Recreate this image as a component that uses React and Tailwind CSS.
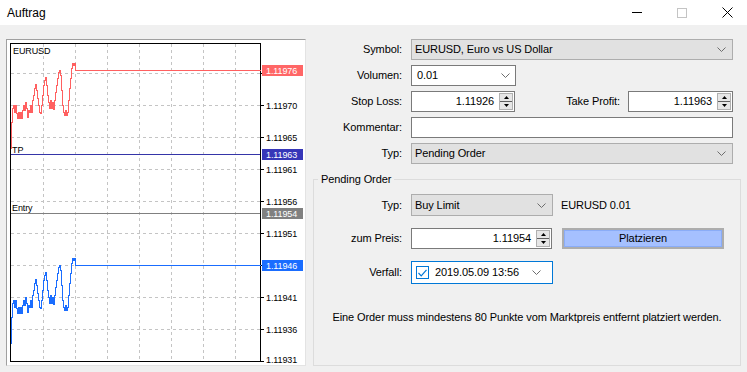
import React from 'react';

// tick data for the mini chart (x in px, y in px of the sell line)
const TICKS = [
  [11, 148], [11, 122], [12, 108], [13, 105], [14, 112], [15, 105], [16, 113], [17, 118], [18, 112],
  [19, 118], [20, 112], [21, 118], [22, 110], [23, 105], [24, 110], [25, 102], [26, 108], [27, 117],
  [28, 110], [29, 112], [30, 105], [31, 112], [32, 100], [33, 95], [34, 88], [35, 84], [36, 90],
  [37, 98], [38, 105], [39, 112], [40, 113], [41, 105], [42, 95], [43, 85], [44, 80], [45, 77],
  [46, 85], [47, 95], [48, 102], [49, 108], [50, 100], [51, 108], [52, 102], [53, 109], [54, 100],
  [55, 92], [56, 85], [57, 78], [58, 72], [59, 70], [60, 75], [61, 90], [62, 105], [63, 112],
  [64, 115], [65, 110], [66, 115], [67, 112], [68, 100], [69, 88], [70, 78], [71, 68], [72, 63],
  [73, 65], [74, 63], [75, 70], [260, 70],
];

function stepPath(offset) {
  let d = `M${TICKS[0][0] + 0.5} ${TICKS[0][1] + offset + 0.5}`;
  for (let i = 1; i < TICKS.length; i++) {
    d += ` H${TICKS[i][0] + 0.5} V${TICKS[i][1] + offset + 0.5}`;
  }
  return d;
}

const GRID_X = [43, 75, 107, 139, 171, 203, 235];
const GRID_Y = [73, 105, 137, 169, 201, 233, 265, 297, 329];
// levels hidden behind the price tags are left out
const AXIS = [
  ['1.11970', 105], ['1.11965', 137], ['1.11961', 169], ['1.11956', 201],
  ['1.11951', 233], ['1.11941', 297], ['1.11936', 329], ['1.11931', 359],
];
const TAGS = [
  ['1.11976', 70, '#ff6666'],
  ['1.11963', 154, '#3636b8'],
  ['1.11954', 213, '#808080'],
  ['1.11946', 265, '#1a6dff'],
];

function Chart() {
  return (
    <svg width="298" height="325" viewBox="7 40 298 325" shapeRendering="crispEdges" className="block">
      <rect x="7" y="40" width="298" height="325" fill="#ffffff" />
      {GRID_X.map((x) => (
        <line key={x} x1={x + 0.5} y1="44" x2={x + 0.5} y2="361" stroke="#c4c4c4" strokeDasharray="3 3" />
      ))}
      {GRID_Y.map((y) => (
        <line key={y} x1="11" y1={y + 0.5} x2="260" y2={y + 0.5} stroke="#c4c4c4" strokeDasharray="3 3" />
      ))}
      <rect x="10.5" y="43.5" width="250" height="318" fill="none" stroke="#000000" />
      {[...GRID_Y, 361].map((y) => (
        <line key={'t' + y} x1="261" y1={y + 0.5} x2="264" y2={y + 0.5} stroke="#000000" />
      ))}
      <g fontFamily="'Liberation Sans', Arial, sans-serif" fontSize="9" fill="#000000" shapeRendering="auto">
        {AXIS.map(([t, y]) => (
          <text key={t} x="266" y={y + 3.5}>{t}</text>
        ))}
      </g>
      <line x1="11" y1="154.5" x2="260" y2="154.5" stroke="#3535a8" />
      <line x1="11" y1="213.5" x2="260" y2="213.5" stroke="#808080" />
      <path d={stepPath(0)} fill="none" stroke="#ff6060" />
      <path d={stepPath(195)} fill="none" stroke="#1a6dff" />
      {TAGS.map(([t, y, c]) => (
        <g key={t}>
          <rect x="262" y={y - 5} width="41" height="11" fill={c} />
          <text x="266" y={y + 4} fontFamily="'Liberation Sans', Arial, sans-serif" fontSize="9" fill="#ffffff" shapeRendering="auto">{t}</text>
        </g>
      ))}
      <g fontFamily="'Liberation Sans', Arial, sans-serif" fontSize="9" fill="#000000" shapeRendering="auto">
        <text x="13" y="54">EURUSD</text>
        <text x="12" y="152.5">TP</text>
        <text x="12" y="210.5">Entry</text>
      </g>
    </svg>
  );
}

function Chevron() {
  return (
    <svg width="9" height="5" viewBox="0 0 9 5" className="shrink-0">
      <path d="M0.5 0.5 L4.5 4.5 L8.5 0.5" fill="none" stroke="#6d6d6d" strokeWidth="1" />
    </svg>
  );
}

function SpinButtons() {
  return (
    <div className="w-[14px] h-[17px] mr-[1px] border border-[#b0b0b0] bg-[#e6e6e6] flex flex-col shrink-0">
      <div className="flex-1 flex items-center justify-center border-b border-[#606060]">
        <svg width="5" height="3" viewBox="0 0 5 3"><path d="M2.5 0 L5 3 L0 3 Z" fill="#000" /></svg>
      </div>
      <div className="flex-1 flex items-center justify-center">
        <svg width="5" height="3" viewBox="0 0 5 3"><path d="M0 0 L5 0 L2.5 3 Z" fill="#000" /></svg>
      </div>
    </div>
  );
}

function Spin({ value, className }) {
  return (
    <div className={`h-[21px] border border-[#7a7a7a] bg-white flex items-center ${className}`}>
      <span className="flex-1 text-right pr-[5px]">{value}</span>
      <SpinButtons />
    </div>
  );
}

function Combo({ value, className }) {
  return (
    <div className={`border border-[#adadad] bg-[#e1e1e1] flex items-center justify-between pl-[3px] pr-[6px] ${className}`}>
      <span>{value}</span>
      <Chevron />
    </div>
  );
}

export default function App() {
  return (
    <div className="w-[747px] h-[372px] bg-[#f0f0f0] text-[11px] tracking-[-0.1px] text-black font-['Liberation_Sans',Arial,sans-serif] overflow-hidden">
      <div className="h-[25px] bg-white flex items-center">
        <span className="ml-[7px] text-[12px] tracking-normal">Auftrag</span>
        <div className="ml-auto flex items-center">
          <div className="w-[10px] h-px bg-black mr-[35px]" />
          <div className="w-[10px] h-[10px] border border-[#c4c4c4] mr-[35px]" />
          <svg width="11" height="11" viewBox="0 0 11 11" className="mr-[14px]">
            <path d="M0.5 0.5 L10.5 10.5 M10.5 0.5 L0.5 10.5" stroke="#000" strokeWidth="1" />
          </svg>
        </div>
      </div>

      <div className="flex pt-[14px]">
        <div className="ml-[6px] w-[300px] h-[327px] border-t border-l border-[#a0a0a0] border-r border-r-[#e3e3e3] border-b border-b-[#e3e3e3]">
          <Chart />
        </div>

        <div className="ml-[4px] flex-1 pr-[6px]">
          <div className="grid grid-cols-[92px_1fr] gap-x-[9px] gap-y-[5px] pr-[8px]">
            <span className="self-center text-right">Symbol:</span>
            <Combo value="EURUSD, Euro vs US Dollar" className="h-[21px]" />

            <span className="self-center text-right">Volumen:</span>
            <div className="w-[105px] h-[21px] border border-[#7a7a7a] bg-white flex items-center justify-between pl-[5px] pr-[5px]">
              <span>0.01</span>
              <Chevron />
            </div>

            <span className="self-center text-right">Stop Loss:</span>
            <div className="flex items-center">
              <Spin value="1.11926" className="w-[104px]" />
              <span className="flex-1 text-right pr-[8px]">Take Profit:</span>
              <Spin value="1.11963" className="w-[105px]" />
            </div>

            <span className="self-center text-right">Kommentar:</span>
            <div className="h-[21px] border border-[#7a7a7a] bg-white" />

            <span className="self-center text-right">Typ:</span>
            <Combo value="Pending Order" className="h-[21px]" />
          </div>

          <fieldset className="mt-[7px] ml-[3px] h-[195px] border border-[#dcdcdc]">
            <legend className="ml-[4px] px-[3px] leading-[16px]">Pending Order</legend>
            <div className="pt-[7px] grid grid-cols-[88px_1fr] gap-x-[9px]">
              <span className="self-center text-right">Typ:</span>
              <div className="flex items-center">
                <Combo value="Buy Limit" className="w-[142px] h-[22px]" />
                <span className="ml-[8px]">EURUSD 0.01</span>
              </div>

              <span className="self-center text-right mt-[12px]">zum Preis:</span>
              <div className="flex items-center mt-[12px]">
                <Spin value="1.11954" className="w-[141px]" />
                <div className="ml-[10px] w-[162px] h-[21px] border-2 border-[#adadad] flex">
                  <div className="flex-1 bg-[#a5c0ff] border border-[#8aacf7] flex items-center justify-center">
                    Platzieren
                  </div>
                </div>
              </div>

              <span className="self-center text-right mt-[12px]">Verfall:</span>
              <div className="mt-[12px] w-[142px] h-[23px] border border-[#0078d7] bg-white flex items-center pl-[4px]">
                <div className="w-[13px] h-[13px] border border-[#0078d7] flex items-center justify-center shrink-0">
                  <svg width="9" height="8" viewBox="0 0 9 8">
                    <path d="M0.5 4 L3.2 6.8 L8.5 0.8" fill="none" stroke="#0078d7" strokeWidth="1.2" />
                  </svg>
                </div>
                <span className="ml-[6px] w-[85px] overflow-hidden whitespace-nowrap">2019.05.09 13:56</span>
                <div className="ml-auto mr-[11px] flex">
                  <Chevron />
                </div>
              </div>
            </div>
            <p className="mt-[25px] text-center leading-[16px]">
              Eine Order muss mindestens 80 Punkte vom Marktpreis entfernt platziert werden.
            </p>
          </fieldset>
        </div>
      </div>
    </div>
  );
}
